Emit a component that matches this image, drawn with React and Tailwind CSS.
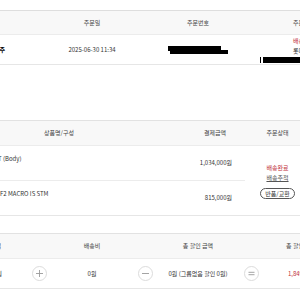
import React from "react";

const CELL = "flex items-center justify-center";

function Circle({ sign }) {
  return (
    <div className="flex w-0 items-center justify-center">
      <div className="flex h-[15px] w-[15px] shrink-0 items-center justify-center rounded-full border border-[#dcdcdc] bg-white">
        <svg width="9" height="9" viewBox="0 0 9 9" stroke="#9a9a9a" strokeWidth="0.9" fill="none">
          {sign === "plus" && <path d="M1 4.5h7M4.5 1v7" />}
          {sign === "minus" && <path d="M1 4.5h7" />}
          {sign === "equal" && <path d="M1.5 3.3h6M1.5 5.7h6" />}
        </svg>
      </div>
    </div>
  );
}

export default function App() {
  return (
    <div className="h-[300px] w-[300px] overflow-hidden bg-white font-['Noto_Sans_CJK_KR','Noto_Sans',sans-serif] text-[6px] leading-[10px] text-[#333]">
      <div className="ml-[-67px] w-[424px] pt-[10px]">
        {/* order info */}
        <div className="grid h-[25px] grid-cols-[repeat(4,106px)] border-y border-t-[#dedede] border-b-[#ececec] bg-[#f8f8f8] text-[#444]">
          <div className={CELL}>상품명</div>
          <div className={CELL}>주문일</div>
          <div className={CELL}>주문번호</div>
          <div className={CELL}>주문상태</div>
        </div>
        <div className="grid h-[30px] grid-cols-[repeat(4,106px)] border-b border-[#e6e6e6]">
          <div className="flex items-center justify-end pr-[34px] font-bold text-black">EOS R8 외 1건 주</div>
          <div className={CELL}>2025-06-30 11:34</div>
          <div className={CELL}>
            <div className="flex flex-col">
              <div className="h-[5px] w-[53px] bg-black" />
              <div className="ml-[2px] mt-[-1px] h-[4px] w-[58px] bg-black" />
            </div>
          </div>
          <div className="flex flex-col items-center justify-center">
            <span className="text-[#c0303a]">배송완료</span>
            <span>롯데택배</span>
            <div className="mt-[1px] flex h-[6px] w-[88px] bg-black">
              <span className="ml-[1px] h-full w-[2px] bg-white" />
            </div>
          </div>
        </div>

        {/* products */}
        <div className="mt-[55px] flex h-[26px] border-y border-t-[#e2e2e2] border-b-[#ececec] bg-[#f8f8f8] text-[#444]">
          <div className={`${CELL} w-[252px]`}>상품명/구성</div>
          <div className={`${CELL} w-[60px]`}>결제금액</div>
          <div className={`${CELL} w-[65px]`}>주문상태</div>
          <div className="w-[47px]" />
        </div>
        <div className="flex border-b border-[#e6e6e6]">
          <div className="flex w-[312px] flex-col">
            <div className="flex h-[35px] border-b border-[#ececec]">
              <div className="w-[252px] pl-[65px] pt-[8px]">T (Body)</div>
              <div className="flex w-[60px] items-center justify-end pr-[13px]">1,034,000원</div>
            </div>
            <div className="flex h-[34px]">
              <div className="w-[252px] pl-[67px] pt-[8px]">F2 MACRO IS STM</div>
              <div className="flex w-[60px] items-center justify-end pr-[13px]">815,000원</div>
            </div>
          </div>
          <div className="flex w-[65px] flex-col items-center justify-center">
            <span className="text-[#c0303a]">배송완료</span>
            <span className="text-[#555] underline">배송추적</span>
            <button className="mt-[5px] flex h-[11px] items-center rounded-full border border-[#555] bg-white px-[4px] text-[6px] leading-[9px] text-[#333]">
              반품/교환
            </button>
          </div>
        </div>

        {/* totals */}
        <div className="mt-[17px] grid h-[26px] grid-cols-[repeat(4,106px)] border-y border-t-[#e2e2e2] border-b-[#ececec] bg-[#f8f8f8] text-[#444]">
          <div className={CELL}>총 주문 금액</div>
          <div className={CELL}>배송비</div>
          <div className={CELL}>총 할인 금액</div>
          <div className={CELL}>총 할인후 금액</div>
        </div>
        <div className="flex h-[30px] border-b border-[#e6e6e6]">
          <div className={`${CELL} w-[106px]`}>1,849,000원</div>
          <Circle sign="plus" />
          <div className={`${CELL} w-[106px]`}>0원</div>
          <Circle sign="minus" />
          <div className={`${CELL} w-[106px]`}>0원 (그룹없음 할인 0원)</div>
          <Circle sign="equal" />
          <div className={`${CELL} w-[106px] text-[#c0303a]`}>1,849,000원</div>
        </div>
      </div>
    </div>
  );
}
